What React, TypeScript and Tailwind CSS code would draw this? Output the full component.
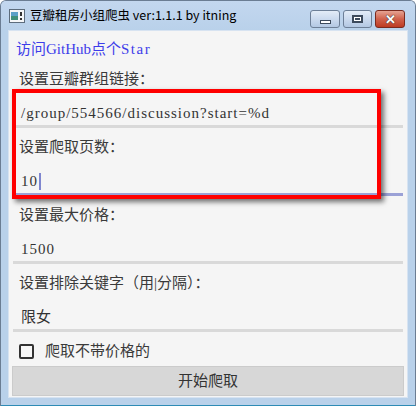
import React from "react";

const serif = { fontFamily: '"Liberation Serif", "Noto Sans CJK SC", serif' };

function Field({
  label,
  value,
  focused,
  latin,
}: {
  label: string;
  value: string;
  focused?: boolean;
  latin?: boolean;
}) {
  return (
    <div className="flex flex-col h-[68px]">
      <div className="h-[20px] flex items-center pl-[10px] text-[15px] text-[#3a3a3a]">{label}</div>
      <div className="h-[20px] mt-[14px] flex items-center pl-[12px] text-[15px] text-[#333]">
        <span className={latin ? "tracking-[1px]" : ""}>{value}</span>
        {focused && <span className="ml-[1px] w-[2px] h-[17px] bg-[#7f86cf]" />}
      </div>
      <div className={"mt-[2px] mx-[4px] h-[3px] " + (focused ? "bg-[#9ba1d6]" : "bg-[#d9d9d9]")} />
    </div>
  );
}

export default function App() {
  return (
    <div className="relative w-[416px] h-[406px] overflow-hidden bg-[#b9d1ea] rounded-t-[6px] border border-[#6b7d93] border-b-0 flex flex-col">
      {/* title bar */}
      <div className="h-[29px] flex items-center bg-gradient-to-b from-[#c3d7ef] to-[#b9d1ea] relative shrink-0">
        <svg width="16" height="14" viewBox="0 0 16 14" className="ml-[8px] mt-[1px]">
          <rect x="0.5" y="0.5" width="15" height="13" fill="#f4f6f8" stroke="#5d6c7c" />
          <rect x="2" y="3" width="7" height="8" fill="#3f8f7a" />
          <rect x="2" y="3" width="7" height="4" fill="#5aa0c8" />
          <rect x="11" y="3" width="2" height="4" fill="#333" />
          <rect x="11" y="9" width="2" height="2" fill="#333" />
        </svg>
        <span
          className="ml-[5px] text-[12.5px] text-black leading-none"
          style={{ fontFamily: '"Noto Sans CJK SC", "Liberation Sans", sans-serif' }}
        >
          豆瓣租房小组爬虫 ver:1.1.1 by itning
        </span>
        <div className="absolute right-[10px] top-[9px] flex gap-[3px]">
          <div className="w-[30px] h-[18px] rounded-[3px] border border-[#6d7f97] bg-gradient-to-b from-[#e3ecf7] via-[#cbdaee] to-[#b3c8e3] flex items-center justify-center">
            <div className="w-[11px] h-[4px] bg-white border border-[#3c4a5c] mt-[5px]" />
          </div>
          <div className="w-[29px] h-[18px] rounded-[3px] border border-[#6d7f97] bg-gradient-to-b from-[#e3ecf7] via-[#cbdaee] to-[#b3c8e3] flex items-center justify-center">
            <div className="w-[11px] h-[8px] border-[2px] border-[#3c4a5c] bg-white flex items-center justify-center">
              <div className="w-[5px] h-[2px] bg-[#3c4a5c]" />
            </div>
          </div>
          <div className="w-[30px] h-[18px] rounded-[3px] border border-[#7a2a1e] bg-gradient-to-b from-[#e5a393] via-[#d0614c] to-[#bd3b22] flex items-center justify-center">
            <span
              className="text-white text-[13px] font-bold leading-none"
              style={{ fontFamily: '"Liberation Sans", sans-serif', textShadow: "0 0 1px #333, 0 0 1px #333" }}
            >
              ✕
            </span>
          </div>
        </div>
      </div>

      {/* client */}
      <div className="mx-[7px] h-[368px] bg-[#f5f5f5] border border-[#d7e3f1] shrink-0 flex flex-col" style={serif}>
        <div className="h-[36px] flex items-center pl-[7px] text-[15px] text-[#3d3dea]">
          访问<span>GitHub</span>点个<span className="tracking-[1.5px]">Star</span>
        </div>
        <div className="mt-[2px]">
          <Field label="设置豆瓣群组链接：" value="/group/554566/discussion?start=%d" latin />
          <Field label="设置爬取页数：" value="10" focused latin />
          <Field label="设置最大价格：" value="1500" latin />
          <Field label="设置排除关键字（用|分隔）：" value="限女" />
        </div>
        <div className="h-[20px] flex items-center pl-[10px] text-[15px] text-[#3a3a3a]">
          <div className="w-[15px] h-[15px] border-[2px] border-[#333] rounded-[2px] bg-[#f7f7f7]" />
          <span className="ml-[11px]">爬取不带价格的</span>
        </div>
        <div className="mt-[5px] mx-[3px] h-[30px] bg-[#d7d7d7] border border-[#cbcbcb] flex items-center justify-center text-[15px] text-[#333]">
          开始爬取
        </div>
      </div>
      <div className="flex-1" />
      <div className="h-[1px] bg-[#2e8bb5]" />

      {/* red annotation box */}
      <div className="absolute left-[11px] top-[88px] w-[369px] h-[110px] border-[4px] border-[#ff0000] shadow-[3px_3px_5px_rgba(0,0,0,0.55)]" />
    </div>
  );
}
